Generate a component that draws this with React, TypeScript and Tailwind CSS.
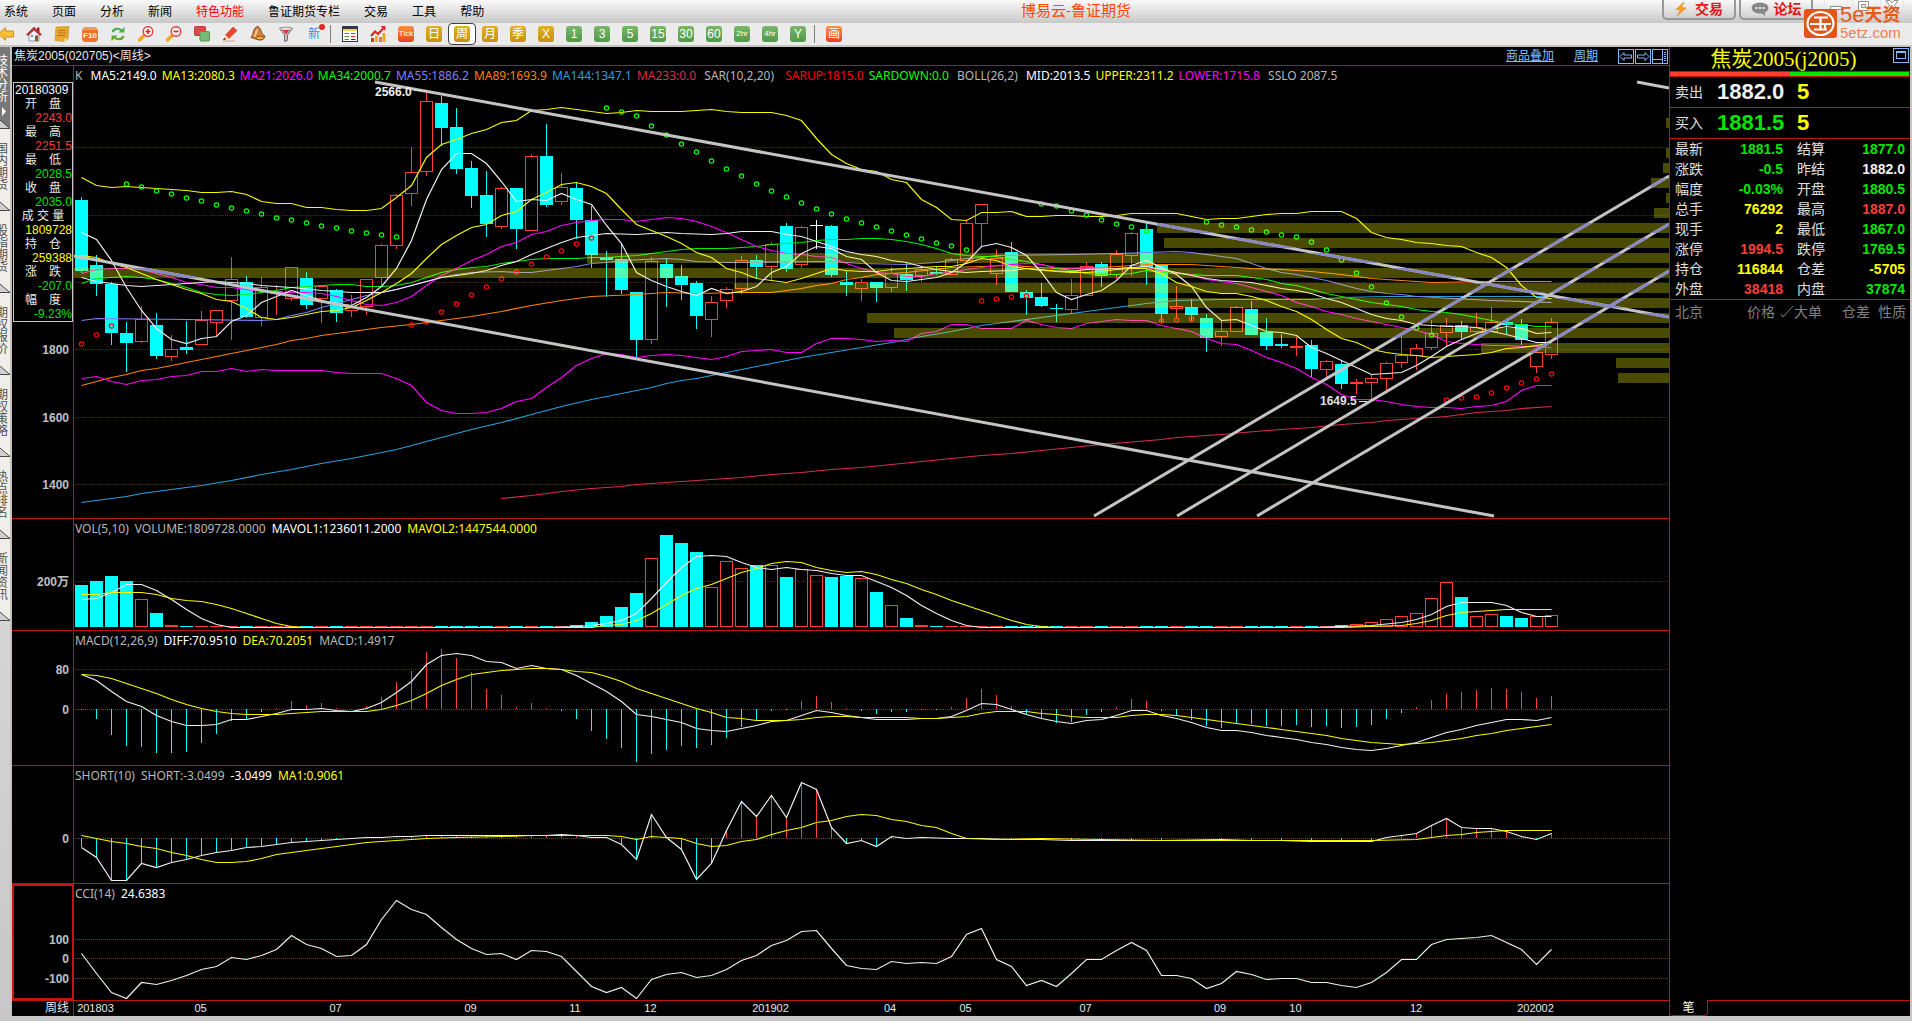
import React from "react";

type Dir = "u" | "d" | "x";
type Pt = [number, number];

const COUNT = 99;
const STEP = 15;
const FIRST_X = 81.5;
const PLOT_LEFT = 74;
const PLOT_WIDTH = 1595;

const cx = (n: number) => FIRST_X + STEP * n;

const nums = (s: string) => s.trim().split(/\s+/).map(Number);

const dense = (s: string): Pt[] => nums(s).map((y, n) => [n, y]);

const sparse = (s: string): Pt[] =>
  s
    .trim()
    .split(/\s+/)
    .map((p) => p.split(":").map(Number) as Pt);

const RED = "#ff3c38";
const CYAN = "#00ffff";

/* direction, high, body top, body bottom, low */
const CANDLES: [Dir, number, number, number, number][] = (
  "d,197,200,271,273 d,255,265,284,296 d,282,284,333,345 d,322,333,343,372 u,306,319,342,343 d,313,325,356,359 u,335,349,357,361 d,321,347,350,354 u,311,320,345,345 u,310,310,323,336 " +
  "u,257,279,301,340 d,276,282,317,318 u,277,287,318,326 u,285,291,294,315 u,267,267,299,301 d,272,278,305,309 u,285,286,299,323 d,289,290,313,322 u,295,307,311,317 u,279,279,307,315 " +
  "u,244,245,278,285 u,194,195,246,249 u,147,172,194,206 u,93,101,172,176 d,96,103,128,146 d,108,127,169,174 d,161,168,196,208 d,171,195,224,237 u,187,188,227,229 d,188,188,229,249 " +
  "u,154,156,231,231 d,124,156,205,207 u,173,187,202,205 d,183,188,220,239 d,206,220,255,268 d,251,257,260,297 d,244,259,290,294 d,292,292,340,357 u,257,261,340,344 d,259,264,278,307 " +
  "d,265,276,285,300 d,281,283,316,329 u,296,302,320,337 u,287,289,301,308 u,256,260,289,294 d,255,260,267,278 u,242,244,267,280 d,223,226,269,272 u,226,227,265,268 x,220,225,226,249 " +
  "d,225,226,275,277 d,270,282,285,296 u,279,282,289,301 d,282,282,288,302 u,267,273,288,292 d,262,274,280,291 u,268,269,276,282 d,266,272,274,275 u,258,259,275,275 u,220,223,261,261 " +
  "u,204,204,224,246 u,249,258,274,285 d,242,252,292,292 d,290,292,298,315 d,283,297,306,307 d,304,308,309,322 u,279,295,310,314 u,262,266,296,296 d,262,264,276,287 u,250,254,275,279 " +
  "u,232,233,256,276 d,223,229,267,285 d,265,265,314,322 u,286,306,309,319 d,299,307,315,321 d,314,318,338,352 u,321,331,337,346 u,306,307,332,332 d,301,309,335,335 d,318,332,346,350 " +
  "d,334,344,346,348 u,337,346,348,356 d,340,345,369,377 u,360,361,370,377 d,360,364,384,389 u,379,382,383,394 u,374,378,383,400 u,362,363,379,390 u,336,355,363,368 u,344,348,356,370 " +
  "u,320,333,348,350 u,318,325,333,346 d,321,325,332,339 u,313,327,332,334 u,307,322,332,332 d,322,322,325,335 d,319,324,340,345 u,352,352,367,373 u,318,322,355,359"
)
  .split(" ")
  .map((c) => {
    const p = c.split(",");
    return [p[0] as Dir, +p[1], +p[2], +p[3], +p[4]];
  });

const BOLL_UPPER = dense(
  "177 185 187 186 187 188 189 190 192 192 191 194 201 203 203 207 207 209 210 210 208 197 185 157 144 139 133 129 122 120 110 109 107 109 111 113 112 110 111 111 111 110 109 111 112 112 112 115 120 138 154 163 169 171 179 182 199 207 219 220 212 212 211 216 216 215 215 216 216 215 213 213 213 213 216 219 218 218 216 214 213 213 211 211 211 218 232 237 239 242 243 245 246 252 257 267 285 297 298"
);
const BOLL_LOWER = dense(
  "378 376 381 384 380 379 376 375 371 371 368 371 369 370 370 370 370 372 373 373 373 378 385 402 410 413 413 412 408 401 398 387 377 365 358 353 354 357 355 354 355 357 359 356 351 350 349 352 352 343 338 338 339 341 340 341 333 331 324 324 328 328 328 320 324 327 328 323 321 319 320 320 325 328 331 338 343 344 350 357 362 368 377 384 394 399 399 401 404 406 407 407 408 406 405 401 390 385 385"
);
const BOLL_MID = sparse(
  "0:277 1:281 2:283 3:285 4:286 5:285 6:284 7:283 8:282 9:281 11:283 12:285 14:287 16:290 18:292 20:292 21:289 22:285 23:281 24:277 25:275 26:273 27:270 28:265 29:261 30:254 31:248 32:242 33:237 34:235 35:233 37:234 39:232 40:233 42:234 43:233 44:231 46:231 47:234 48:236 49:241 50:246 51:251 52:254 53:256 54:260 55:262 56:266 57:269 58:271 59:272 60:271 62:270 63:268 64:270 66:271 67:269 69:268 71:266 72:269 73:272 74:275 75:278 76:280 77:281 78:282 79:285 80:288 81:290 82:293 83:298 84:302 85:308 86:314 87:318 88:320 89:324 91:326 92:326 93:327 94:331 95:334 96:338 97:342 98:342"
);
const MA5 = dense(
  "232 239 260 287 310 328 339 343 338 336 321 315 302 296 290 295 300 303 305 297 286 268 240 199 169 153 153 163 181 201 199 200 193 199 204 225 243 272 280 286 291 295 288 293 291 286 272 266 253 246 248 256 259 272 280 281 279 277 272 262 246 243 247 255 272 292 299 294 290 280 265 260 267 274 286 307 320 319 325 331 332 335 347 353 360 367 374 373 372 365 356 346 339 333 329 326 328 333 332"
);
const MA13 = dense(
  "255 257 263 267 273 279 284 289 293 299 301 308 317 319 317 314 311 310 307 300 292 283 273 258 244 235 227 224 215 211 199 192 184 182 186 193 209 224 230 236 243 252 257 268 272 278 280 282 278 273 268 270 271 271 269 268 267 266 266 263 258 260 266 268 269 271 272 272 271 269 268 268 273 282 286 291 293 293 296 300 306 311 319 329 338 342 349 352 354 355 357 356 355 354 352 348 347 345 342"
);
const MA21 = dense(
  "273 269 268 268 269 273 277 282 284 287 287 289 291 292 292 292 293 296 300 304 305 302 296 285 275 268 260 254 246 242 234 231 225 222 220 219 219 221 219 217 218 221 226 232 239 246 250 253 254 256 257 263 268 272 273 276 276 273 272 269 267 265 264 263 264 267 268 268 268 268 267 267 270 272 274 279 281 283 287 291 295 302 306 311 314 318 321 324 327 330 334 341 343 344 345 345 346 346 347"
);
const MA34 = dense(
  "283 278 277 276 277 279 283 287 292 294 295 294 292 290 287 286 285 284 284 286 286 285 282 277 272 269 267 266 263 261 259 258 258 258 257 257 256 255 253 251 249 248 248 248 247 246 244 243 242 240 239 239 238 238 239 241 244 248 253 255 256 256 259 261 264 268 270 273 274 274 273 270 272 273 274 275 275 275 277 279 283 285 289 293 296 299 302 304 306 309 311 312 314 317 320 323 324 326 326"
);
const MA55 = sparse(
  "0:320 1:318 7:319 12:320 13:319 14:315 15:312 16:307 17:303 18:299 19:295 20:292 21:289 22:285 23:281 24:277 25:274 26:272 28:271 29:272 30:272 31:270 32:268 33:266 34:263 35:262 36:260 39:258 40:259 41:261 43:262 50:261 52:263 55:264 57:262 58:260 59:258 60:257 61:255 66:254 69:253 71:252 73:251 74:252 75:254 76:256 77:258 78:263 79:268 80:272 81:274 82:277 83:280 84:284 85:288 86:291 87:293 88:294 89:296 94:300 98:302"
);
const MA89 = sparse(
  "0:385 1:381 2:377 3:374 4:370 5:368 6:365 7:362 8:359 9:356 10:353 11:350 12:347 13:344 14:340 15:338 16:335 18:331 20:327 22:324 24:320 26:316 28:311 30:305 32:300 34:296 37:294 39:292 41:293 44:292 46:292 47:290 48:288 49:285 50:283 51:279 52:277 53:274 55:272 58:267 62:265 65:268 68:267 71:264 74:264 76:266 78:268 80:269 82:271 84:274 86:278 88:280 90:282 94:281 98:281"
);
const MA144 = sparse(
  "0:502 1:500 2:498 3:496 4:493 6:489 8:485 10:480 12:474 14:469 16:463 18:458 20:452 21:449 22:445 24:437 26:429 28:422 30:414 32:406 34:399 36:393 38:387 39:383 40:380 41:378 44:369 46:363 48:357 50:352 52:347 54:342 56:336 58:331 60:325 62:321 64:317 66:313 68:309 70:305 71:303 73:300 76:299 82:299 84:297 87:296 98:296"
);
const MA233 = sparse(
  "28:498 30:495 32:491 34:488 36:486 37:484 40:481 44:477 46:474 48:472 50:469 52:467 54:464 56:461 58:458 60:455 62:453 64:450 66:447 68:444 72:439 73:437 76:434 79:430 82:427 84:424 86:422 87:420 89:418 91:416 92:414 93:412 95:410 96:408 98:406"
);

const SAR_GREEN = sparse(
  "3:184 4:187 5:191 6:194 7:198 8:201 9:205 10:208 11:211 12:214 13:218 14:220 15:223 16:226 17:228 18:231 19:233 20:235 21:237 35:108 36:112 37:116 38:126 39:135 40:144 41:152 42:161 43:169 44:176 45:184 46:191 47:197 48:203 49:209 50:214 51:219 52:223 53:227 54:231 55:235 56:239 57:243 58:246 59:250 64:204 65:206 66:211 67:215 68:220 69:224 70:227 71:231 75:222 76:225 77:227 78:230 79:232 80:235 81:237 82:242 83:250 84:260 85:273 86:287 87:303 88:317 89:328 90:335"
);
const SAR_RED = sparse(
  "0:344 1:335 2:326 22:325 23:322 24:312 25:304 26:295 27:287 28:279 29:272 30:264 31:257 32:251 33:244 34:238 60:301 61:299 62:297 63:296 72:321 73:320 74:319 91:400 92:398 93:397 94:393 95:388 96:383 97:379 98:374"
);

/* start x, top y of each price-volume band */
const BANDS: Pt[] = [
  [1666, 118],
  [1666, 148],
  [1663, 163],
  [1651, 178],
  [1666, 193],
  [1654, 208],
  [1157, 223],
  [1164, 238],
  [587, 253],
  [74, 268],
  [734, 283],
  [1128, 298],
  [867, 313],
  [894, 328],
  [1481, 343],
  [1616, 358],
  [1618, 373],
];

const TRENDS = [
  "M375 82L1669 317",
  "M74 256L1494 516",
  "M1094 516L1669 176",
  "M1177 516L1669 224",
  "M1257 516L1669 271",
  "M1637 82L1669 88",
];

const VOL_TOPS = new Map<number, number>(
  sparse(
    "0:585 1:581 2:576 3:581 4:599 5:613 6:625 33:625 34:622 35:616 36:607 37:593 38:558 39:535 40:543 41:552 42:587 43:561 44:568 45:565 46:565 47:577 48:569 49:575 50:577 51:576 52:578 53:592 54:605 55:618 56:625 84:625 85:624 86:622 87:619 88:616 89:613 90:598 91:582 92:597 93:616 94:614 95:616 96:618 97:616 98:615"
  )
);
const MAVOL1 = sparse(
  "0:599 1:598 2:592 3:584 4:584 5:590 6:599 7:609 8:618 9:624 10:627 31:627 33:626 34:625 35:623 36:620 37:613 38:598 39:582 40:567 41:556 42:555 43:556 44:562 45:567 46:569 47:567 48:569 49:570 50:573 51:575 52:575 53:581 54:587 55:595 56:605 57:613 58:620 59:625 60:627 82:627 84:626 86:625 88:622 89:619 90:614 91:606 92:602 93:602 94:602 95:605 96:612 97:616 98:616"
);
const MAVOL2 = sparse(
  "0:594 1:594 2:592 3:592 4:592 5:594 6:598 7:600 8:601 9:604 10:608 11:613 12:618 13:623 14:626 15:627 34:627 35:625 36:624 37:620 38:613 39:604 40:595 41:588 42:584 43:578 44:572 45:568 46:563 47:561 48:562 49:567 50:570 51:572 52:571 53:574 54:579 55:583 56:589 57:594 58:600 59:605 60:610 61:615 62:620 63:624 64:626 65:627 84:627 86:626 88:625 89:623 90:620 91:615 92:612 93:611 94:610 95:609 98:609"
);

const MACD_BARS = dense(
  "710 719 735 746 747 753 753 752 743 734 721 719 712 708 701 705 703 708 709 706 697 682 671 652 649 658 672 689 695 707 703 708 711 719 731 739 748 762 754 750 746 748 745 738 727 720 711 710 701 696 702 708 711 714 712 712 710 710 707 698 689 695 706 714 718 723 722 715 712 707 699 701 711 716 720 726 728 724 724 726 726 725 727 726 728 727 725 719 713 707 700 694 692 690 688 689 692 698 696"
);
const DIFF = dense(
  "674 680 691 701 706 715 721 725 725 724 719 719 716 713 709 709 708 710 711 708 702 692 681 664 655 653 655 661 662 668 665 668 669 675 683 691 701 714 716 719 722 728 730 731 728 725 721 720 715 710 712 715 717 719 719 719 718 718 716 710 703 704 709 714 718 721 723 720 719 715 710 710 715 718 722 727 730 730 732 735 737 739 742 744 747 749 750 748 745 742 737 732 729 725 722 719 719 720 717"
);
const DEA = dense(
  "674 675 678 683 688 693 699 704 708 711 713 714 714 714 713 712 711 711 711 711 709 705 700 693 685 679 674 672 670 669 668 668 669 671 672 676 681 688 693 698 703 708 712 717 718 720 720 720 719 717 716 716 717 717 717 717 718 718 717 716 713 711 711 711 713 714 716 717 717 717 715 714 714 715 717 719 721 723 725 727 729 731 733 735 738 740 742 743 744 743 742 740 738 735 733 730 728 726 724"
);

const SHORT = sparse(
  "0:847 1:857 2:880 3:880 4:863 5:867 6:862 7:859 8:855 9:852 10:850 11:847 12:846 13:844 14:842 15:841 16:840 17:839 18:838 19:837 20:837 21:836 22:836 23:835 24:835 25:835 26:835 27:835 28:835 29:835 30:835 31:835 32:834 33:835 34:837 35:837 36:844 37:859 38:814 39:837 40:849 41:879 42:863 43:830 44:801 45:816 46:795 47:817 48:782 49:789 50:827 51:843 52:840 53:846 54:836 55:838 56:837 58:838 60:838 62:839 64:839 66:840 68:840 70:840 72:840 76:839 78:840 80:840 82:841 84:841 86:841 87:837 88:835 89:833 90:825 91:818 92:827 93:828 94:828 95:831 96:836 97:839 98:833"
);
const SHORT_MA = sparse(
  "0:835 1:838 2:841 3:843 4:846 5:848 6:852 7:855 8:859 9:862 10:862 11:861 12:858 13:854 14:852 15:850 16:848 17:846 18:844 19:842 20:841 21:840 22:839 23:838 25:837 28:836 30:835 35:835 36:836 37:839 38:836 39:837 40:838 41:843 42:846 43:845 44:841 45:839 46:834 47:830 48:827 49:822 50:820 51:816 52:814 53:815 54:819 55:821 56:825 57:827 58:833 59:838 61:839 64:838 72:840 86:840 89:839 90:837 91:835 92:834 93:832 94:831 95:830 98:830"
);
const CCI = dense(
  "953 973 992 998 982 984 980 975 969 966 957 959 955 949 935 944 948 956 955 944 919 900 909 914 927 939 948 954 953 959 950 951 956 971 986 992 987 998 979 974 972 977 975 969 960 955 945 940 931 930 948 965 968 969 961 963 962 963 956 934 928 959 966 985 980 986 973 959 959 950 942 950 975 975 978 988 983 971 974 979 978 978 982 982 985 987 982 972 959 959 944 939 938 937 935 942 949 964 949"
);

function Line({ pts, color }: { pts: Pt[]; color: string }) {
  return (
    <polyline
      fill="none"
      stroke={color}
      strokeWidth={1.2}
      points={pts.map(([n, y]) => `${cx(n)},${y + 0.5}`).join(" ")}
    />
  );
}

function GridLines({ ys, color = "#900000" }: { ys: number[]; color?: string }) {
  return (
    <g stroke={color} strokeDasharray="1 1" shapeRendering="crispEdges">
      {ys.map((y) => (
        <line key={y} x1={75} x2={1669} y1={y + 0.5} y2={y + 0.5} />
      ))}
    </g>
  );
}

function Stems({ pts, zero }: { pts: Pt[]; zero: number }) {
  return (
    <g shapeRendering="crispEdges">
      {pts.map(([n, y]) => (
        <rect
          key={n}
          x={cx(n) - 0.5}
          width={1}
          y={Math.min(y, zero)}
          height={Math.max(1, Math.abs(zero - y))}
          fill={y > zero ? CYAN : RED}
        />
      ))}
    </g>
  );
}

function MainPlot() {
  return (
    <>
      <defs>
        <clipPath id="bands">
          {BANDS.map(([x, y]) => (
            <rect key={y} x={x} y={y} width={1669 - x} height={10} />
          ))}
        </clipPath>
      </defs>
      <GridLines ys={[147, 215, 282, 349, 417, 484]} />
      <g shapeRendering="crispEdges">
        {CANDLES.map(([d, h, t, b, l], n) => {
          const x = cx(n);
          if (d === "u")
            return (
              <g key={n} stroke={RED} fill="none">
                <path d={`M${x} ${h}V${t}M${x} ${b}V${l}`} />
                <rect x={x - 6} y={t + 0.5} width={12} height={Math.max(1, b - t - 1)} />
              </g>
            );
          const c = d === "x" ? "#ffffff" : CYAN;
          return (
            <g key={n} fill={c}>
              <rect x={x - 0.5} y={h} width={1} height={l - h} />
              <rect x={x - 6.5} y={t} width={13} height={b - t} />
            </g>
          );
        })}
      </g>
      <Line pts={MA233} color="#d82c50" />
      <Line pts={MA144} color="#2aa0d8" />
      <Line pts={MA89} color="#ff8000" />
      <Line pts={MA55} color="#8080f8" />
      <Line pts={MA34} color="#00f000" />
      <Line pts={MA21} color="#ff00ff" />
      <Line pts={BOLL_MID} color="#f0f0f0" />
      <Line pts={MA13} color="#f8f800" />
      <Line pts={MA5} color="#f0f0f0" />
      <Line pts={BOLL_UPPER} color="#f8f800" />
      <Line pts={BOLL_LOWER} color="#ff00ff" />
      <g fill="none" strokeWidth={1.2}>
        {SAR_GREEN.map(([n, y]) => (
          <circle key={n} cx={cx(n)} cy={y} r={2.2} stroke="#00ff00" />
        ))}
        {SAR_RED.map(([n, y]) => (
          <circle key={n} cx={cx(n)} cy={y} r={2.2} stroke="#ff0000" />
        ))}
      </g>
      <g fill="#ffff00" opacity={0.29}>
        {BANDS.map(([x, y]) => (
          <rect key={y} x={x} y={y} width={1669 - x} height={10} />
        ))}
      </g>
      <g stroke="#c4c4c4" strokeWidth={3}>
        {TRENDS.map((d) => (
          <path key={d} d={d} />
        ))}
      </g>
      <g stroke="#8a88c4" strokeWidth={3} clipPath="url(#bands)">
        {TRENDS.map((d) => (
          <path key={d} d={d} />
        ))}
      </g>
      <path d="M414 90.5H426M1359 401.5H1368" stroke="#e8e8e8" strokeDasharray="8 2" />
    </>
  );
}

function VolumePlot() {
  return (
    <>
      <GridLines ys={[581]} />
      <g shapeRendering="crispEdges">
        {Array.from({ length: COUNT }, (_, n) => {
          const t = VOL_TOPS.get(n) ?? 626;
          const up = CANDLES[n][0] !== "d";
          const x = cx(n);
          return up && t < 625 ? (
            <rect key={n} x={x - 6} y={t + 0.5} width={12} height={626 - t} fill="none" stroke={RED} />
          ) : (
            <rect key={n} x={x - 6.5} y={t} width={13} height={627 - t} fill={up ? RED : CYAN} />
          );
        })}
      </g>
      <Line pts={MAVOL1} color="#f0f0f0" />
      <Line pts={MAVOL2} color="#f8f800" />
    </>
  );
}

function Plot({ top, height, children }: { top: number; height: number; children: React.ReactNode }) {
  return (
    <svg
      className="absolute inset-0 h-full w-full"
      viewBox={`${PLOT_LEFT} ${top} ${PLOT_WIDTH} ${height}`}
      preserveAspectRatio="none"
      aria-hidden="true"
    >
      {children}
    </svg>
  );
}

function Legend({ items }: { items: [string, string][] }) {
  const gap = items.length > 5 ? "gap-[5px]" : "gap-1.5";
  return (
    <div
      className={`relative flex h-5 items-center overflow-hidden pl-px font-['Noto_Sans','Open_Sans',sans-serif] text-xs whitespace-pre ${gap}`}
    >
      {items.map(([text, color]) => (
        <span key={text} className={color}>
          {text}
        </span>
      ))}
    </div>
  );
}

function AxisLabels({ top, height, labels }: { top: number; height: number; labels: [string, number][] }) {
  return (
    <>
      {labels.map(([t, y]) => (
        <span
          key={t}
          className="absolute right-1 -translate-y-1/2 text-xs leading-4 font-bold text-[#c0c0c0]"
          style={{ top: `${((y - top) / height) * 100}%` }}
        >
          {t}
        </span>
      ))}
    </>
  );
}

function Panel({
  className,
  top,
  height,
  labels,
  legend,
  children,
  axis,
  axisClass = "",
  overlay,
}: {
  className: string;
  top: number;
  height: number;
  labels: [string, number][];
  legend: [string, string][];
  children: React.ReactNode;
  axis?: React.ReactNode;
  axisClass?: string;
  overlay?: React.ReactNode;
}) {
  return (
    <section className={`flex min-h-0 flex-col ${className}`}>
      <div className="flex min-h-0 flex-1 border-b border-[#c01408]">
        <div className={`relative w-[62px] shrink-0 border-r border-[#c01408] ${axisClass}`}>
          {axis}
          <AxisLabels top={top} height={height} labels={labels} />
        </div>
        <div className="relative min-w-0 flex-1">
          <Plot top={top} height={height}>
            {children}
          </Plot>
          <Legend items={legend} />
          {overlay}
        </div>
      </div>
    </section>
  );
}

const W = "text-white";
const Y = "text-[#ffff00]";
const M = "text-[#ff00ff]";
const G = "text-[#00ff00]";
const S = "text-[#b8b8b8]";

const CURSOR_DATA: [string, string, string][] = [
  ["开　盘", "2243.0", "text-[#ff3c38]"],
  ["最　高", "2251.5", "text-[#ff3c38]"],
  ["最　低", "2028.5", "text-[#00e000]"],
  ["收　盘", "2035.0", "text-[#00e000]"],
  ["成 交 量", "1809728", "text-[#ffff00]"],
  ["持　仓", "259388", "text-[#ffff00]"],
  ["涨　跌", "-207.0", "text-[#00e000]"],
  ["幅　度", "-9.23%", "text-[#00e000]"],
];

function CursorCard() {
  return (
    <dl className="relative z-10 mt-4 ml-px w-[60px] border border-[#c8c8c8] bg-black text-xs leading-[14px]">
      <dt className="pl-px text-white">20180309</dt>
      {CURSOR_DATA.map(([k, v, c]) => (
        <React.Fragment key={k}>
          <dt className="text-center whitespace-pre text-[#e8e8e8]">{k}</dt>
          <dd className={`text-right ${c}`}>{v}</dd>
        </React.Fragment>
      ))}
    </dl>
  );
}

const TIME_TICKS: [string, number][] = [
  ["201803", 95.5],
  ["05", 200.5],
  ["07", 335.5],
  ["09", 470.5],
  ["11", 575],
  ["12", 650.5],
  ["201902", 770.5],
  ["04", 890],
  ["05", 965.5],
  ["07", 1085.5],
  ["09", 1220],
  ["10", 1295.5],
  ["12", 1416],
  ["202002", 1535.5],
];

function ChartArea() {
  return (
    <main className="flex min-w-0 flex-1 flex-col bg-black">
      <header className="flex h-[19px] shrink-0 items-center border-b border-[#c01408] pl-0.5 text-xs leading-none text-[#e8e8e8]">
        <h1>焦炭2005(020705)&lt;周线&gt;</h1>
        <nav className="ml-auto flex items-center gap-5 text-[#80c0ff]">
          <a href="#overlay" className="underline underline-offset-1">
            商品叠加
          </a>
          <a href="#period" className="underline underline-offset-1">
            周期
          </a>
          <div className="flex gap-px pr-px">
            <button aria-label="左移">
              <svg width="16" height="15" viewBox="0 0 16 15" fill="none" stroke="#80b8f8">
                <rect x=".5" y=".5" width="15" height="14" />
                <path d="M2 7.5L6 3.5V6H13.5V9H6V11.5Z" />
              </svg>
            </button>
            <button aria-label="右移">
              <svg width="16" height="15" viewBox="0 0 16 15" fill="none" stroke="#80b8f8">
                <rect x=".5" y=".5" width="15" height="14" />
                <path d="M14 7.5L10 3.5V6H2.5V9H10V11.5Z" />
              </svg>
            </button>
            <button aria-label="布局">
              <svg width="16" height="15" viewBox="0 0 16 15" fill="none" stroke="#80b8f8">
                <rect x=".5" y=".5" width="15" height="14" />
                <path d="M10.5 1V14M1 10.5H10M12 3.5H14M12 5.5H14M12 7.5H14M12 9.5H14M12 11.5H14" />
              </svg>
            </button>
          </div>
        </nav>
      </header>
      <Panel
        className="flex-[453]"
        top={66}
        height={452}
        labels={[
          ["1800", 350],
          ["1600", 418],
          ["1400", 485],
        ]}
        legend={[
          ["K ", S],
          ["MA5:2149.0", W],
          ["MA13:2080.3", Y],
          ["MA21:2026.0", M],
          ["MA34:2000.7", G],
          ["MA55:1886.2", "text-[#8080f8]"],
          ["MA89:1693.9", "text-[#ff8000]"],
          ["MA144:1347.1", "text-[#2aa0d8]"],
          ["MA233:0.0 ", "text-[#d82c50]"],
          ["SAR(10,2,20)  ", S],
          ["SARUP:1815.0", "text-[#ff0000]"],
          ["SARDOWN:0.0 ", G],
          ["BOLL(26,2) ", S],
          ["MID:2013.5", W],
          ["UPPER:2311.2", Y],
          ["LOWER:1715.8 ", M],
          ["SSLO 2087.5", S],
        ]}
        axis={<CursorCard />}
        overlay={
          <>
            <span
              className="absolute -translate-y-1/2 text-xs leading-4 font-bold text-[#f0f0f0]"
              style={{ left: `${((375 - 74) / 1595) * 100}%`, top: `${((92 - 66) / 452) * 100}%` }}
            >
              2566.0
            </span>
            <span
              className="absolute -translate-y-1/2 text-xs leading-4 font-bold text-[#e0e0e0]"
              style={{ left: `${((1320 - 74) / 1595) * 100}%`, top: `${((401 - 66) / 452) * 100}%` }}
            >
              1649.5
            </span>
          </>
        }
      >
        <MainPlot />
      </Panel>
      <Panel
        className="flex-[112]"
        top={519}
        height={111}
        labels={[["200万", 582]]}
        legend={[
          ["VOL(5,10)", S],
          ["VOLUME:1809728.0000", S],
          ["MAVOL1:1236011.2000", W],
          ["MAVOL2:1447544.0000", Y],
        ]}
      >
        <VolumePlot />
      </Panel>
      <Panel
        className="flex-[135]"
        top={631}
        height={134}
        labels={[
          ["80", 670],
          ["0", 710],
        ]}
        legend={[
          ["MACD(12,26,9)", S],
          ["DIFF:70.9510", W],
          ["DEA:70.2051", Y],
          ["MACD:1.4917", S],
        ]}
      >
        <GridLines ys={[669]} />
        <GridLines ys={[709]} color="#c81010" />
        <Stems pts={MACD_BARS} zero={709} />
        <Line pts={DIFF} color="#f0f0f0" />
        <Line pts={DEA} color="#f8f800" />
      </Panel>
      <Panel
        className="flex-[118]"
        top={766}
        height={117}
        labels={[["0", 839]]}
        legend={[
          ["SHORT(10)", S],
          ["SHORT:-3.0499", S],
          ["-3.0499", W],
          ["MA1:0.9061", Y],
        ]}
      >
        <GridLines ys={[838]} color="#c81010" />
        <Stems pts={SHORT} zero={838} />
        <Line pts={SHORT} color="#f0f0f0" />
        <Line pts={SHORT_MA} color="#f8f800" />
      </Panel>
      <Panel
        className="flex-[117]"
        top={884}
        height={116}
        axisClass="outline-2 -outline-offset-2 outline-[#c81410]"
        labels={[
          ["100", 940],
          ["0", 959],
          ["-100", 979],
        ]}
        legend={[
          ["CCI(14)", S],
          ["24.6383", W],
        ]}
      >
        <GridLines ys={[939, 958, 978]} color="#c81010" />
        <Line pts={CCI} color="#f0f0f0" />
      </Panel>
      <footer className="flex h-[15px] shrink-0 text-[11px] leading-[15px] text-[#e8e8e8]">
        <div className="w-[62px] shrink-0 border-r border-[#c01408] pr-1 text-right text-xs leading-[15px]">周线</div>
        <div className="relative flex-1">
          {TIME_TICKS.map(([t, x]) => (
            <span key={x} className="absolute -translate-x-1/2" style={{ left: `${((x - 74) / 1595) * 100}%` }}>
              {t}
            </span>
          ))}
        </div>
      </footer>
    </main>
  );
}

const QR = "text-[#ff3c38]";
const QG = "text-[#00e600]";
const QUOTES: [string, string, string, string, string, string][] = [
  ["最新", "1881.5", QG, "结算", "1877.0", QG],
  ["涨跌", "-0.5", QG, "昨结", "1882.0", "text-[#f0f0f0]"],
  ["幅度", "-0.03%", QG, "开盘", "1880.5", QG],
  ["总手", "76292", Y, "最高", "1887.0", QR],
  ["现手", "2", Y, "最低", "1867.0", QG],
  ["涨停", "1994.5", QR, "跌停", "1769.5", QG],
  ["持仓", "116844", Y, "仓差", "-5705", Y],
  ["外盘", "38418", QR, "内盘", "37874", QG],
];

function QuotePanel() {
  return (
    <aside className="flex w-[243px] shrink-0 flex-col border-r-2 border-l border-r-[#c8c4c0] border-l-[#c01408] bg-black text-sm leading-none text-[#e0e0e0]">
      <div className="flex h-6 shrink-0 items-center pr-px">
        <h2 className="flex-1 pl-1 text-center font-['Liberation_Serif','Noto_Sans_CJK_SC',serif] text-[21px] leading-none whitespace-nowrap text-[#ffff00]">
          焦炭2005(j2005)
        </h2>
        <button aria-label="还原" className="mb-2">
          <svg width="16" height="15" viewBox="0 0 16 15" fill="none" stroke="#80b8f8">
            <rect x=".5" y=".5" width="15" height="14" />
            <rect x="3.5" y="3.5" width="9" height="7" />
            <path d="M3 4.5H13" />
          </svg>
        </button>
      </div>
      <div className="flex h-[6px] shrink-0 border-y border-[#c01408] pr-px">
        <div className="flex-1 bg-[#ff3c38]" />
        <div className="flex-1 bg-[#00e600]" />
      </div>
      {[
        ["卖出", "1882.0", "text-[#f0f0f0]"],
        ["买入", "1881.5", "text-[#00e600]"],
      ].map(([k, v, c]) => (
        <div key={k} className="flex h-[31px] shrink-0 items-center border-b border-[#c01408] pl-[5px]">
          <span className="w-[42px]">{k}</span>
          <span className={`w-20 text-[22px] font-bold ${c}`}>{v}</span>
          <span className="text-[22px] font-bold text-[#ffff00]">5</span>
        </div>
      ))}
      <table className="w-full border-b border-[#c01408]">
        <tbody>
          {QUOTES.map(([a, b, c, d, e, f]) => (
            <tr key={a} className="h-5">
              <th className="w-12 p-0 pl-[5px] text-left font-normal">{a}</th>
              <td className={`w-[65px] p-0 text-right font-bold ${c}`}>{b}</td>
              <th className="w-[50px] p-0 pl-[14px] text-left font-normal">{d}</th>
              <td className={`p-0 pr-[5px] text-right font-bold ${f}`}>{e}</td>
            </tr>
          ))}
        </tbody>
      </table>
      <div className="flex h-6 shrink-0 items-center pl-[5px] text-[#808080]">
        <span className="w-[72px]">北京</span>
        <span className="w-[33px]">价格</span>
        <svg width="14" height="14" viewBox="0 0 14 14" fill="none" stroke="#808080">
          <path d="M1 9L3 12L13 1" />
        </svg>
        <span className="mr-5">大单</span>
        <span className="mr-2">仓差</span>
        <span>性质</span>
      </div>
      <div className="mt-auto flex h-4 shrink-0">
        <button className="w-[38px] rounded-b-sm border-r border-b border-[#c01408] text-xs leading-[14px] text-white">
          笔
        </button>
        <div className="flex-1 border-t border-[#c01408]" />
      </div>
    </aside>
  );
}

const SIDE_TABS = ["技术分析", "国内期货", "股指期货", "期权报价", "期权策略", "热点排名", "新闻资讯"];

function SideTabs() {
  return (
    <nav className="flex w-3 shrink-0 flex-col overflow-hidden border-r-2 border-[#c8c0bc] bg-gradient-to-b from-[#e8e8e8] to-[#c8c8c8]">
      {SIDE_TABS.map((t, i) => {
        const active = i === 0;
        return (
          <button
            key={t}
            className={`relative flex h-[82px] w-full shrink-0 justify-end overflow-hidden pr-0.5 text-xs leading-3 ${
              active ? "bg-[#787878] pt-2 text-white" : "bg-[#f0eee8] pt-[14px] text-[#505050]"
            }`}
          >
            <span className="w-3 shrink-0">
              {t.split("").map((ch) => (
                <span key={ch} className="block">
                  {ch}
                </span>
              ))}
              {active && (
                <svg className="mt-1 ml-auto" width="8" height="9" viewBox="0 0 8 9">
                  <path d="M2 0L6 4.5L2 9Z" fill="#fff" />
                </svg>
              )}
            </span>
            <svg className="absolute bottom-0 left-0" width="10" height="9" viewBox="0 0 10 9">
              <path d="M0 0L10 8.5H0Z" fill="#d0d0d0" />
              <path d="M0 0L10 8.5M0 8.5H10" stroke="#484848" />
            </svg>
          </button>
        );
      })}
    </nav>
  );
}

const MENU = ["系统", "页面", "分析", "新闻", "特色功能", "鲁证期货专栏", "交易", "工具", "帮助"];

function TitleBar() {
  return (
    <header className="relative flex h-[23px] shrink-0 items-start bg-gradient-to-b from-[#fafafa] to-[#c8c8c8]">
      <nav className="flex h-[23px] items-center gap-6 pl-1 text-xs text-black">
        {MENU.map((m) => (
          <button key={m} className={m === "特色功能" ? "text-[#ff0000]" : ""}>
            {m}
          </button>
        ))}
      </nav>
      <div className="flex-1 pl-1.5 text-center text-[15px] leading-[22px] text-[#ff4800]">博易云-鲁证期货</div>
      <div className="flex gap-[3px]">
        <button className="flex h-5 w-[74px] items-center justify-center gap-2 rounded-b-[5px] border-2 border-t-0 border-[#989898] bg-gradient-to-b from-[#f8f8f8] to-[#d0d0d0] text-sm leading-none font-bold text-[#e01818]">
          <svg width="12" height="14" viewBox="0 0 12 14">
            <path d="M9 0L1 7.5L5.5 8L2 14L11 6L6.5 5.5Z" fill="#f8a020" stroke="#e07810" strokeWidth=".5" />
          </svg>
          交易
        </button>
        <button className="flex h-5 w-[74px] items-center justify-center gap-[5px] rounded-b-[5px] border-2 border-t-0 border-[#989898] bg-gradient-to-b from-[#f8f8f8] to-[#d0d0d0] text-sm leading-none font-bold text-[#e01818]">
          <svg width="18" height="14" viewBox="0 0 18 14">
            <ellipse cx="9" cy="6" rx="8.5" ry="5.5" fill="#888" />
            <path d="M9 10L14 14V9Z" fill="#888" />
            <path d="M4.5 5H6.5V7H4.5ZM8 5H10V7H8ZM11.5 5H13.5V7H11.5Z" fill="#eee" />
          </svg>
          论坛
        </button>
      </div>
      <div className="flex w-[99px] justify-end gap-1 pr-2">
        {["最小化", "最大化", "关闭"].map((label, i) => (
          <button key={label} aria-label={label} className="border-x border-[#e8e8e8]">
            <svg width="22" height="12" viewBox="0 0 22 12" fill="#fff" stroke="#909090">
              {i === 0 && <rect x="5.5" y="6.5" width="11" height="3" />}
              {i === 1 && <path d="M5.5 1.5H15.5V10.5H5.5ZM8.5 4.5H12.5V7.5H8.5Z" fillRule="evenodd" />}
              {i === 2 && <path d="M5 .5H9L11 3L13 .5H17L13.5 5.5L17 10.5H13L11 8L9 10.5H5L8.5 5.5Z" />}
            </svg>
          </button>
        ))}
      </div>
      <div className="absolute top-[9px] right-[5px] z-10 flex gap-[3px] text-[#e8591c]">
        <svg width="33" height="29" viewBox="0 0 33 29">
          <rect width="33" height="29" rx="3" fill="#e05518" />
          <g fill="none" stroke="#fff" strokeWidth="2.2">
            <ellipse cx="16.5" cy="14.5" rx="13" ry="11.5" />
            <path d="M10 8.5H24M6 15H27M16.5 8.5V20M10 20.5H23M21 15V20" />
          </g>
        </svg>
        <div className="w-[67px] whitespace-nowrap">
          <div className="-mt-1 flex h-5 items-center">
            <span className="text-[22px] leading-5">5e</span>
            <span className="text-lg leading-5 font-bold">天资</span>
          </div>
          <div className="text-[15px] leading-[15px] text-[#f08050]">5etz.com</div>
        </div>
      </div>
    </header>
  );
}

function Svg16({ children }: { children: React.ReactNode }) {
  return (
    <svg width="16" height="16" viewBox="0 0 16 16">
      {children}
    </svg>
  );
}

function Magnifier({ plus }: { plus: boolean }) {
  return (
    <Svg16>
      <path d="M1.5 14L5.5 10" stroke="#f8a818" strokeWidth="3.5" strokeLinecap="round" />
      <circle cx="10" cy="5.5" r="4.8" fill="#fff0f0" stroke="#e84848" strokeWidth="1.5" />
      <path d={plus ? "M7.5 5.5H12.5M10 3V8" : "M7.5 5.5H12.5"} stroke="#e02020" strokeWidth="1.6" />
    </Svg16>
  );
}

const ICONS: [string, React.ReactNode][] = [
  [
    "后退",
    <Svg16>
      <path d="M.5 8L7.5 1.5V5H15.5V11H7.5V14.5Z" fill="#fcc030" stroke="#c89030" />
    </Svg16>,
  ],
  [
    "首页",
    <Svg16>
      <path d="M11 1.5H13.5V6H11Z" fill="#a02020" />
      <path d="M3 8L8 3L13 8V15H3Z" fill="#f0f0f8" stroke="#9098a8" />
      <path d="M.5 8.5L8 1L15.5 8.5L14 9.500L8 4L2 9.500Z" fill="#d03030" stroke="#902020" strokeWidth=".6" />
      <path d="M5 9H7V11H5Z" fill="#6090c8" />
      <path d="M9 9.500H12V15H9Z" fill="#985020" />
    </Svg16>,
  ],
  [
    "公告",
    <Svg16>
      <path d="M2 1L15 .5L14 13L10 15.5L1 14.500Z" fill="#e8a830" stroke="#c88820" strokeWidth=".6" />
      <path d="M4 4.500H12M4 7H12M3.500 9.500H11" stroke="#b87818" />
      <path d="M10 15.5L10.5 12.500L14 13Z" fill="#fce090" />
    </Svg16>,
  ],
  [
    "F10",
    <span className="flex h-[15px] w-4 items-center justify-center rounded-sm border-t-[3px] border-[#e8a058] bg-[#f07028] text-[8px] leading-none font-bold text-white">
      F10
    </span>,
  ],
  [
    "刷新",
    <Svg16>
      <path d="M2.500 6C4 2 9 2 11.500 4.500" fill="none" stroke="#48b048" strokeWidth="2.200" />
      <path d="M8.500 6.500H14.500V1Z" fill="#48b048" />
      <path d="M13.500 10C12 14 7 14 4.500 11.500" fill="none" stroke="#60a828" strokeWidth="2.200" />
      <path d="M7.500 9.500H1.500V15Z" fill="#60a828" />
    </Svg16>,
  ],
  ["放大", <Magnifier plus />],
  ["缩小", <Magnifier plus={false} />],
  [
    "叠加",
    <Svg16>
      <rect x=".5" y=".5" width="11" height="9" rx="1" fill="#e04848" stroke="#c83838" />
      <rect x="6" y="5.500" width="9.500" height="9.500" rx="1" fill="#78b878" stroke="#509850" />
    </Svg16>,
  ],
  [
    "画线",
    <Svg16>
      <path d="M1 15H13" stroke="#d8b8b0" strokeWidth="1.500" />
      <path d="M3.500 9L11 1L15 4.500L7 12.500Z" fill="#e84830" stroke="#c83820" strokeWidth=".6" />
      <path d="M3.500 9L7 12.500L1.500 14Z" fill="#f8d0a0" />
      <path d="M2.300 11.800L4 13.300L1 14.200Z" fill="#302820" />
    </Svg16>,
  ],
  [
    "预警",
    <Svg16>
      <path d="M6 1L8 .5C12 3 10 7 14.500 9.500C16 12 12 14.500 9 14L1 11.500C4 8 2.500 4 6 1Z" fill="#d88038" stroke="#703818" strokeWidth=".8" />
      <path d="M7 3.500C6.500 7 5.500 8.500 4.500 10.500" stroke="#f8d0a0" strokeWidth="1.800" fill="none" />
      <ellipse cx="10" cy="12" rx="4" ry="1.800" fill="#f8b040" stroke="#703818" strokeWidth=".7" />
    </Svg16>,
  ],
  [
    "筛选",
    <Svg16>
      <path d="M1.500 2.500C3 1 13 1 14.500 2.500L9.500 9V14.500L6.500 15.500V9Z" fill="#c0c0c0" stroke="#707070" />
      <ellipse cx="8" cy="2.800" rx="6" ry="1.500" fill="#e8e8e8" stroke="#909090" strokeWidth=".6" />
      <path d="M4.500 4H11.500L8 8.500Z" fill="#e83030" />
    </Svg16>,
  ],
  [
    "新功能",
    <span className="relative text-xs leading-none text-[#3890e8]">
      新
      <span className="absolute -top-1 -right-[5px] h-1.5 w-1.5 rounded-full bg-[#f02020]" />
    </span>,
  ],
];

const GOLD = "bg-gradient-to-b from-[#e0b020] to-[#c89010]";
const GREEN = "bg-gradient-to-b from-[#78b868] to-[#509848]";
const HOT = "bg-gradient-to-b from-[#f89040] to-[#e84020]";

const PERIODS: [string, string][] = [
  ["Tick", HOT],
  ["日", GOLD],
  ["周", GOLD],
  ["月", GOLD],
  ["季", GOLD],
  ["X", GOLD],
  ["1", GREEN],
  ["3", GREEN],
  ["5", GREEN],
  ["15", GREEN],
  ["30", GREEN],
  ["60", GREEN],
  ["2hr", GREEN],
  ["4hr", GREEN],
  ["Y", GREEN],
];

function Separator() {
  return (
    <div className="flex w-2 pl-0.5">
      <div className="h-[18px] w-px bg-[#808080]" />
    </div>
  );
}

function PeriodButton({ label, bg }: { label: string; bg: string }) {
  const selected = label === "周";
  const small = label.length > 2;
  return (
    <button
      aria-label={label}
      aria-pressed={selected}
      className={`flex h-[22px] w-7 items-center justify-center ${
        selected ? "rounded border border-[#404040] bg-white" : ""
      }`}
    >
      <span
        className={`flex h-4 w-4 items-center justify-center rounded-[3px] leading-none text-white ${
          small ? "text-[8px]" : "text-xs"
        } ${bg}`}
      >
        {label}
      </span>
    </button>
  );
}

function Toolbar() {
  return (
    <div className="flex h-6 shrink-0 items-center overflow-hidden border-b-2 border-[#c8c4c0] bg-[#ebebeb]">
      <div className="-ml-2 flex items-center">
        {ICONS.map(([label, icon]) => (
          <button key={label} aria-label={label} className="flex h-[22px] w-7 items-center justify-center">
            {icon}
          </button>
        ))}
        <Separator />
        <button aria-label="报价列表" className="flex h-[22px] w-7 items-center justify-center">
          <Svg16>
            <rect x=".5" y=".5" width="15" height="15" fill="#fff" stroke="#303848" />
            <path d="M1 1H15V3H1Z" fill="#303848" />
            <path d="M1 3H15V5H1Z" fill="#f8d840" />
            <path d="M2.500 7.500H7M2.500 10.500H7M2.500 13.500H7" stroke="#30a040" />
            <path d="M9 7.500H13.500M9 10.500H13.500" stroke="#e03030" />
            <path d="M9 13.500H13.500" stroke="#303030" />
          </Svg16>
        </button>
        <button aria-label="走势图" className="flex h-[22px] w-7 items-center justify-center">
          <Svg16>
            <path d="M1 12H4V16H1Z" fill="#d83030" />
            <path d="M5 10H8V16H5Z" fill="#e8b020" />
            <path d="M9 11H12V16H9Z" fill="#e88020" />
            <path d="M12.500 7H15.500V16H12.500Z" fill="#e8a820" />
            <path d="M1 10L5 5.500L8 8L14 1.500" fill="none" stroke="#e02828" strokeWidth="2.200" />
            <path d="M10.500 0H15.500V5Z" fill="#e02828" />
          </Svg16>
        </button>
        {PERIODS.map(([label, bg]) => (
          <PeriodButton key={label} label={label} bg={bg} />
        ))}
        <Separator />
        <PeriodButton label="画" bg={HOT} />
      </div>
    </div>
  );
}

export default function App() {
  return (
    <div className="flex h-screen flex-col overflow-hidden bg-[#c8c8c8] font-['Liberation_Sans','Noto_Sans_CJK_SC',sans-serif]">
      <TitleBar />
      <Toolbar />
      <div className="flex min-h-0 flex-1 pb-[5px]">
        <SideTabs />
        <ChartArea />
        <QuotePanel />
      </div>
    </div>
  );
}
